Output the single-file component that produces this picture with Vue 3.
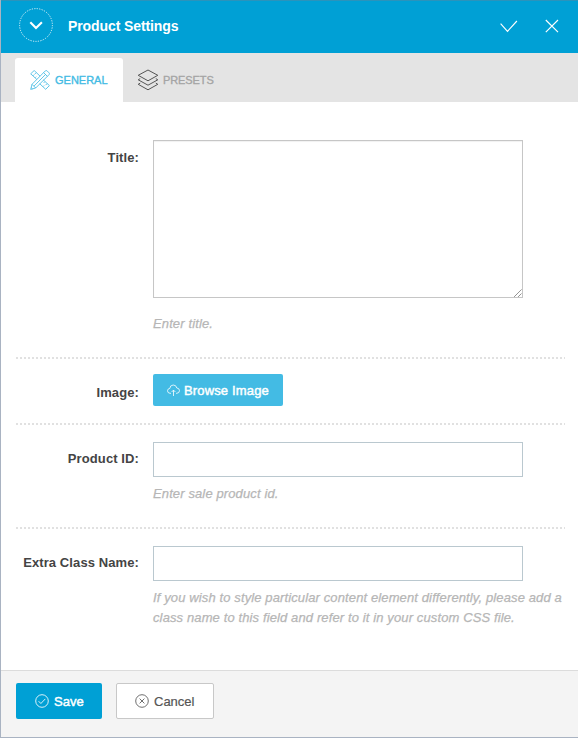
<script setup>
import { ref } from 'vue'

const title = ref('')
const productId = ref('')
const className = ref('')
</script>

<template>
  <div class="panel">
    <header class="header">
      <button class="toggle" aria-label="Toggle">
        <svg width="34" height="34" viewBox="0 0 34 34" fill="none" stroke="#fff">
          <circle cx="17" cy="17" r="16.4" stroke-width="1" stroke-dasharray="1.2 1.3" opacity=".85" />
          <path d="M11.3 14.3 17 20l5.9-5.7" stroke-width="2.1" />
        </svg>
      </button>
      <h1>Product Settings</h1>
      <button class="check" aria-label="Apply">
        <svg width="18" height="14" viewBox="0 0 18 14" fill="none" stroke="#fff" stroke-width="1.15">
          <path d="M.6 4.7 7.5 12.3 16.9 2" />
        </svg>
      </button>
      <button class="close" aria-label="Close">
        <svg width="14" height="14" viewBox="0 0 14 14" fill="none" stroke="#fff" stroke-width="1.15">
          <path d="m.8 1 12.2 12.2M13 1 .8 13.2" />
        </svg>
      </button>
    </header>

    <nav class="tabs">
      <a class="tab active">
        <svg width="20" height="20" viewBox="0 0 20 20" fill="none" stroke="#43bbe4" stroke-width=".85" stroke-linejoin="round">
          <path d="M6.8 9.4.7 3.8 4.2.5l5.9 5.7M13.3 9.9l6.1 5.7-3.7 3.7-6-5.6M3 5.8l1.4-1.4M5.2 7.7l1-1M6.2 2.7 5 3.9M14.9 11.7l-1.2 1.2M17 13.7l-1.4 1.4M13 16.6l1.1-1.1" />
          <path d="M.7 19.4 2 14.3 15.3.9q1-.8 1.8 0l2 2q.8.9 0 1.7L5.7 18zM2 14.3l3.7 3.7M13.6 2.6l3.8 3.8M4 16.1 15.4 4.6M1.2 17.6l1.4 1.3" />
        </svg>
        <span>GENERAL</span>
      </a>
      <a class="tab presets">
        <svg width="22" height="22" viewBox="0 0 22 22" fill="none" stroke="#555" stroke-width="1" stroke-linejoin="round">
          <path d="M11 1 20.8 6.3 11 11.8 1.2 6.3z" />
          <path d="m3.2 9.6-2 1.2L11 16.2l9.8-5.4-2-1.2" />
          <path d="m3.2 14.1-2 1.2L11 20.8l9.8-5.5-2-1.2" />
        </svg>
        <span>PRESETS</span>
      </a>
    </nav>

    <main class="form">
      <section class="row row-title">
        <label>Title:</label>
        <div class="field">
          <div class="area-wrap">
            <textarea v-model="title"></textarea>
            <svg class="grip" width="8" height="8" viewBox="0 0 8 8" fill="none" stroke="#555" stroke-width="1">
              <path d="M.4 7.6 7.6.4M4.4 7.6l3.2-3.2" stroke-dasharray="1.1 .35" />
            </svg>
          </div>
          <p class="hint">Enter title.</p>
        </div>
      </section>
      <section class="row row-image">
        <label>Image:</label>
        <div class="field">
          <button class="browse">
            <svg width="13" height="13" viewBox="0 0 13 13" fill="none" stroke="#fff" stroke-width=".8">
              <path d="M4 9.3H3Q.5 9.1.5 6.8.6 4.6 2.8 4.4 3 1.2 6.2 1q3 0 3.6 3 2.6.2 2.7 2.6-.1 2.5-2.7 2.7H9M6.5 12V6.2M4.6 8l1.9-1.9L8.4 8" />
            </svg>
            <span>Browse Image</span>
          </button>
        </div>
      </section>
      <section class="row row-id">
        <label>Product ID:</label>
        <div class="field">
          <input v-model="productId" type="text" />
          <p class="hint">Enter sale product id.</p>
        </div>
      </section>
      <section class="row row-class">
        <label>Extra Class Name:</label>
        <div class="field">
          <input v-model="className" type="text" />
          <p class="hint">If you wish to style particular content element differently, please add a<br />class name to this field and refer to it in your custom CSS file.</p>
        </div>
      </section>
    </main>

    <footer class="footer">
      <button class="save">
        <svg width="14" height="14" viewBox="0 0 14 14" fill="none" stroke="#fff" stroke-width=".85">
          <circle cx="7" cy="7" r="6.3" />
          <path d="m3.6 7.2 2.3 2.3 4.4-4.6" />
        </svg>
        <span>Save</span>
      </button>
      <button class="cancel">
        <svg width="14" height="14" viewBox="0 0 14 14" fill="none" stroke="#555" stroke-width=".85">
          <circle cx="7" cy="7" r="6.3" />
          <path d="m4.6 4.6 4.8 4.8M9.4 4.6 4.6 9.4" />
        </svg>
        <span>Cancel</span>
      </button>
    </footer>
  </div>
</template>

<style>
body {
  margin: 0;
  background: #fff;
}
</style>

<style scoped>
* {
  box-sizing: border-box;
}
.panel {
  display: flex;
  flex-direction: column;
  width: 578px;
  height: 738px;
  border-left: 1px solid #a9b3c2;
  border-bottom: 1px solid #a9b3c2;
  background: #fff;
  font-family: "Liberation Sans", Arial, sans-serif;
  font-size: 13px;
}
svg {
  display: block;
  flex: none;
}
button {
  display: flex;
  align-items: center;
  margin: 0;
  padding: 0;
  border: 0;
  background: none;
  font: inherit;
}
.header {
  display: flex;
  align-items: center;
  height: 53px;
  padding: 0 19px 2px 18px;
  border-top: 1px solid #2b93bb;
  background: #00a0d5;
}
.toggle {
  margin-top: -2px;
}
h1 {
  margin: 0 auto 0 15px;
  color: #fff;
  font-size: 14px;
  font-weight: 700;
  letter-spacing: -0.1px;
  line-height: 20px;
}
.check {
  margin-right: 27px;
}
.tabs {
  display: flex;
  height: 49px;
  padding: 5px 14px 0;
  background: #e4e4e4;
}
.tab {
  display: flex;
  align-items: center;
  height: 44px;
  padding: 0 14px;
  color: #a5a5a5;
  font-size: 11px;
  -webkit-text-stroke: 0.35px currentColor;
}
.tab span {
  margin-left: 4px;
}
.presets {
  letter-spacing: -0.1px;
}
.tab.active {
  width: 108px;
  padding: 0 15px;
  border-radius: 3px 3px 0 0;
  background: #fff;
  color: #43bbe4;
}
.tab.active span {
  margin-left: 5px;
}
.form {
  flex: 1;
  padding: 0 13px 0 15px;
}
.row {
  display: flex;
  padding-top: 17px;
  background: repeating-linear-gradient(90deg, #e1e1e1 0 2px, transparent 2px 4px) 0 100% / 100% 2px no-repeat;
}
.row-title {
  height: 257px;
  padding-top: 38px;
}
.row-image {
  height: 66px;
  padding-top: 15px;
}
.row-id {
  height: 104px;
}
.row-class {
  background: none;
}
label {
  flex: none;
  width: 123px;
  padding-top: 8px;
  color: #444;
  font-weight: 700;
  letter-spacing: 0.1px;
  line-height: 20px;
  text-align: right;
}
.row-image label {
  padding-top: 9px;
}
.row-id label,
.row-class label {
  padding-top: 7px;
}
.field {
  margin-left: 14px;
}
.area-wrap {
  position: relative;
  width: 370px;
  height: 158px;
  margin-bottom: 16px;
}
textarea {
  display: block;
  width: 100%;
  height: 100%;
  border: 1px solid #c6c6c6;
  border-radius: 0;
  outline: 0;
  resize: none;
  box-shadow: inset 0 1px 1px #f1f1f1;
}
.grip {
  position: absolute;
  right: 1px;
  bottom: 1px;
}
input {
  display: block;
  width: 370px;
  height: 35px;
  border: 1px solid #bac8cf;
  outline: 0;
  margin-bottom: 7px;
}
.hint {
  margin: 0;
  color: #b6b6b6;
  font-style: italic;
  letter-spacing: 0.12px;
  line-height: 20px;
  white-space: nowrap;
  -webkit-text-stroke: 0.25px currentColor;
}
.browse {
  width: 130px;
  height: 32px;
  padding-left: 14px;
  border-radius: 2px;
  background: #43bbe4;
  color: #fff;
  letter-spacing: 0.15px;
  -webkit-text-stroke: 0.45px currentColor;
}
.browse span {
  margin-left: 4px;
}
.footer {
  display: flex;
  align-items: flex-start;
  gap: 14px;
  height: 67px;
  padding: 12px 15px;
  border-top: 1px solid #dcdcdc;
  background: #f4f4f4;
}
.save,
.cancel {
  height: 36px;
  border-radius: 2px;
}
.save {
  width: 86px;
  padding-left: 19px;
  background: #00a0d5;
  color: #fff;
  -webkit-text-stroke: 0.45px currentColor;
}
.cancel {
  width: 98px;
  padding-left: 18px;
  border: 1px solid #c8c8c8;
  background: #fff;
  color: #555;
  -webkit-text-stroke: 0.2px currentColor;
}
.save span,
.cancel span {
  margin-left: 5px;
}
</style>
